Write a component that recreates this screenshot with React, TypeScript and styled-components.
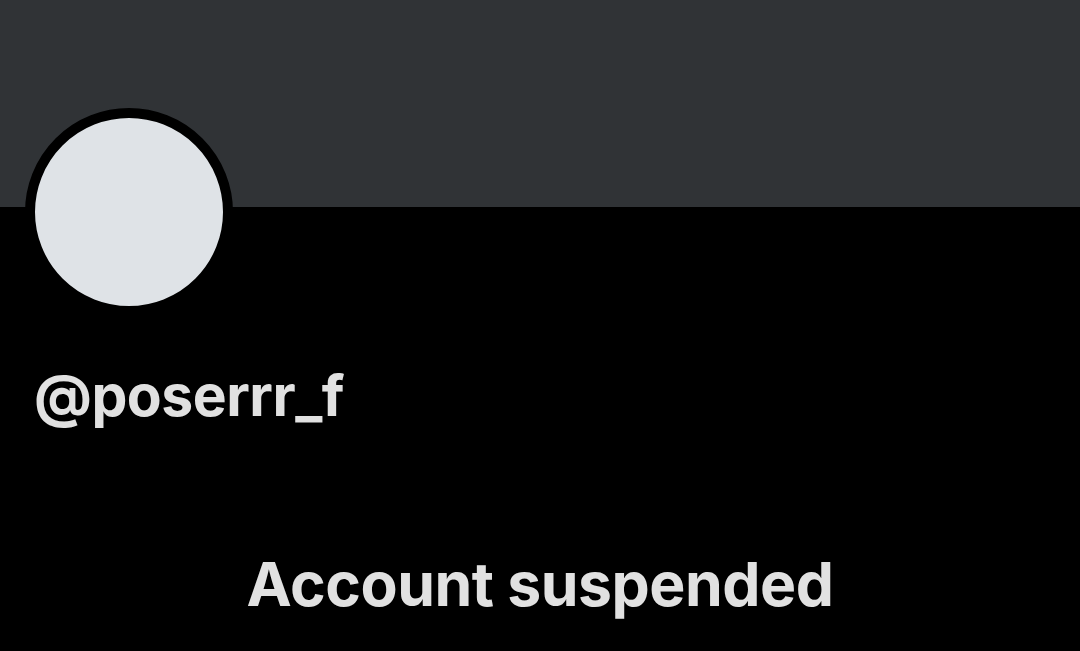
import React from "react";
import styled, { createGlobalStyle } from "styled-components";

const GlobalStyle = createGlobalStyle`
  html, body {
    margin: 0;
    padding: 0;
    background-color: #000000;
  }
  body {
    font-family: Inter, "Noto Sans", "Liberation Sans", sans-serif;
    overflow: hidden;
  }
`;

const Page = styled.div`
  width: 1080px;
  height: 651px;
  display: flex;
  flex-direction: column;
  background-color: #000000;
  color: #e1e1e1;
`;

const Banner = styled.div`
  width: 100%;
  height: 207px;
  flex-shrink: 0;
  background-color: #303336;
`;

const Profile = styled.div`
  display: flex;
  flex-direction: column;
  align-items: flex-start;
  padding: 0 25px;
`;

const Avatar = styled.div`
  width: 188px;
  height: 188px;
  margin-top: -99px;
  border: 10px solid #000000;
  border-radius: 50%;
  background-color: #dfe3e7;
`;

const Handle = styled.h2`
  margin: 44px 0 0 9px;
  font-size: 57px;
  line-height: 72px;
  font-weight: 700;
  letter-spacing: -0.5px;
`;

const Notice = styled.div`
  display: flex;
  justify-content: center;
  margin-top: 116px;
`;

const Title = styled.h1`
  margin: 0;
  font-size: 60.7px;
  line-height: 72px;
  font-weight: 700;
  letter-spacing: -0.5px;
`;

function App() {
  return (
    <>
      <GlobalStyle />
      <Page>
        <Banner />
        <Profile>
          <Avatar />
          <Handle>@poserrr_f</Handle>
        </Profile>
        <Notice>
          <Title>Account suspended</Title>
        </Notice>
      </Page>
    </>
  );
}

export default App;
